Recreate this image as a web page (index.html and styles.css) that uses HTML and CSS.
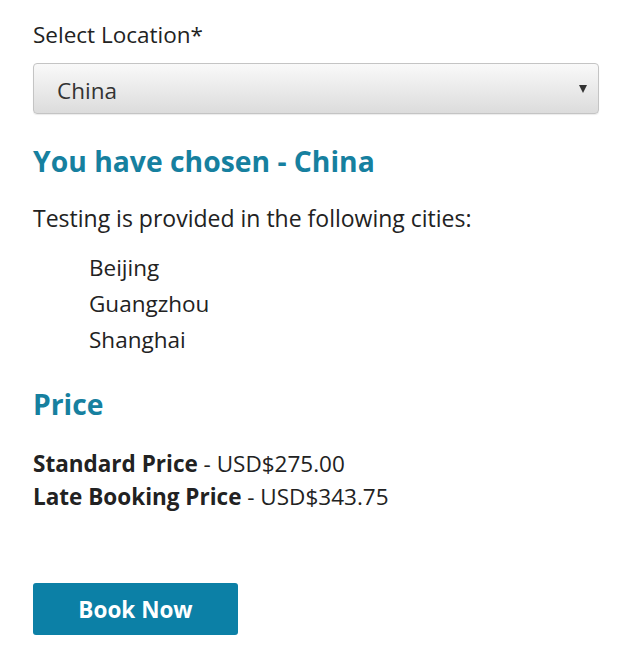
FILE: index.html
```html
<!DOCTYPE html>
<html>
<head>
<meta charset="utf-8">
<link rel="stylesheet" href="styles.css">
</head>
<body>
<div class="page">
  <label class="label">Select Location*</label>
  <div class="select">
    <span class="select-value">China</span>
    <span class="caret"></span>
  </div>
  <h2 class="heading chosen">You have chosen - China</h2>
  <p class="intro">Testing is provided in the following cities:</p>
  <ul class="cities">
    <li>Beijing</li>
    <li>Guangzhou</li>
    <li>Shanghai</li>
  </ul>
  <h2 class="heading price">Price</h2>
  <div class="prices">
    <div><b>Standard Price</b> - USD$275.00</div>
    <div><b>Late Booking Price</b> - USD$343.75</div>
  </div>
  <button class="book">Book Now</button>
</div>
</body>
</html>
```

FILE: styles.css
```css
html, body {
  margin: 0;
  padding: 0;
  background: #fff;
}
.page {
  padding: 18px 23px 0 33px;
  font-family: "Open Sans", "Noto Sans", sans-serif;
  font-size: 22.5px;
  color: #222;
  display: flex;
  flex-direction: column;
  align-items: flex-start;
}
.label {
  line-height: 34px;
  display: block;
}
.select {
  box-sizing: border-box;
  margin-top: 11px;
  align-self: stretch;
  height: 51px;
  border: 1px solid #c4c4c4;
  border-radius: 4px;
  background: linear-gradient(#f9f9f9, #dcdcdc);
  display: flex;
  align-items: center;
  justify-content: space-between;
  padding: 3px 11px 0 23px;
  box-shadow: 0 1px 1px rgba(0,0,0,0.08);
}
.select-value {
  color: #333;
  font-size: 22.5px;
}
.caret {
  width: 0;
  height: 0;
  margin-bottom: 3px;
  border-left: 4px solid transparent;
  border-right: 4px solid transparent;
  border-top: 8px solid #333;
}
.heading {
  margin: 0;
  font-weight: 700;
  color: #16809f;
  font-size: 28.3px;
  line-height: 36px;
}
.chosen {
  margin-top: 29px;
}
.intro {
  margin: 23px 0 0;
  line-height: 32px;
  font-size: 23px;
}
.cities {
  list-style: none;
  margin: 16px 0 0;
  padding: 0 0 0 56px;
}
.cities li {
  line-height: 36px;
}
.price {
  margin-top: 28px;
}
.prices {
  margin-top: 25px;
  line-height: 33px;
}
.prices b {
  font-weight: 700;
}
.book {
  margin-top: 70px;
  width: 205px;
  height: 52px;
  border: none;
  border-radius: 3px;
  background: #0c80a6;
  color: #fff;
  font-family: "Open Sans", "Noto Sans", sans-serif;
  font-weight: 700;
  font-size: 22.5px;
  cursor: pointer;
}
```
